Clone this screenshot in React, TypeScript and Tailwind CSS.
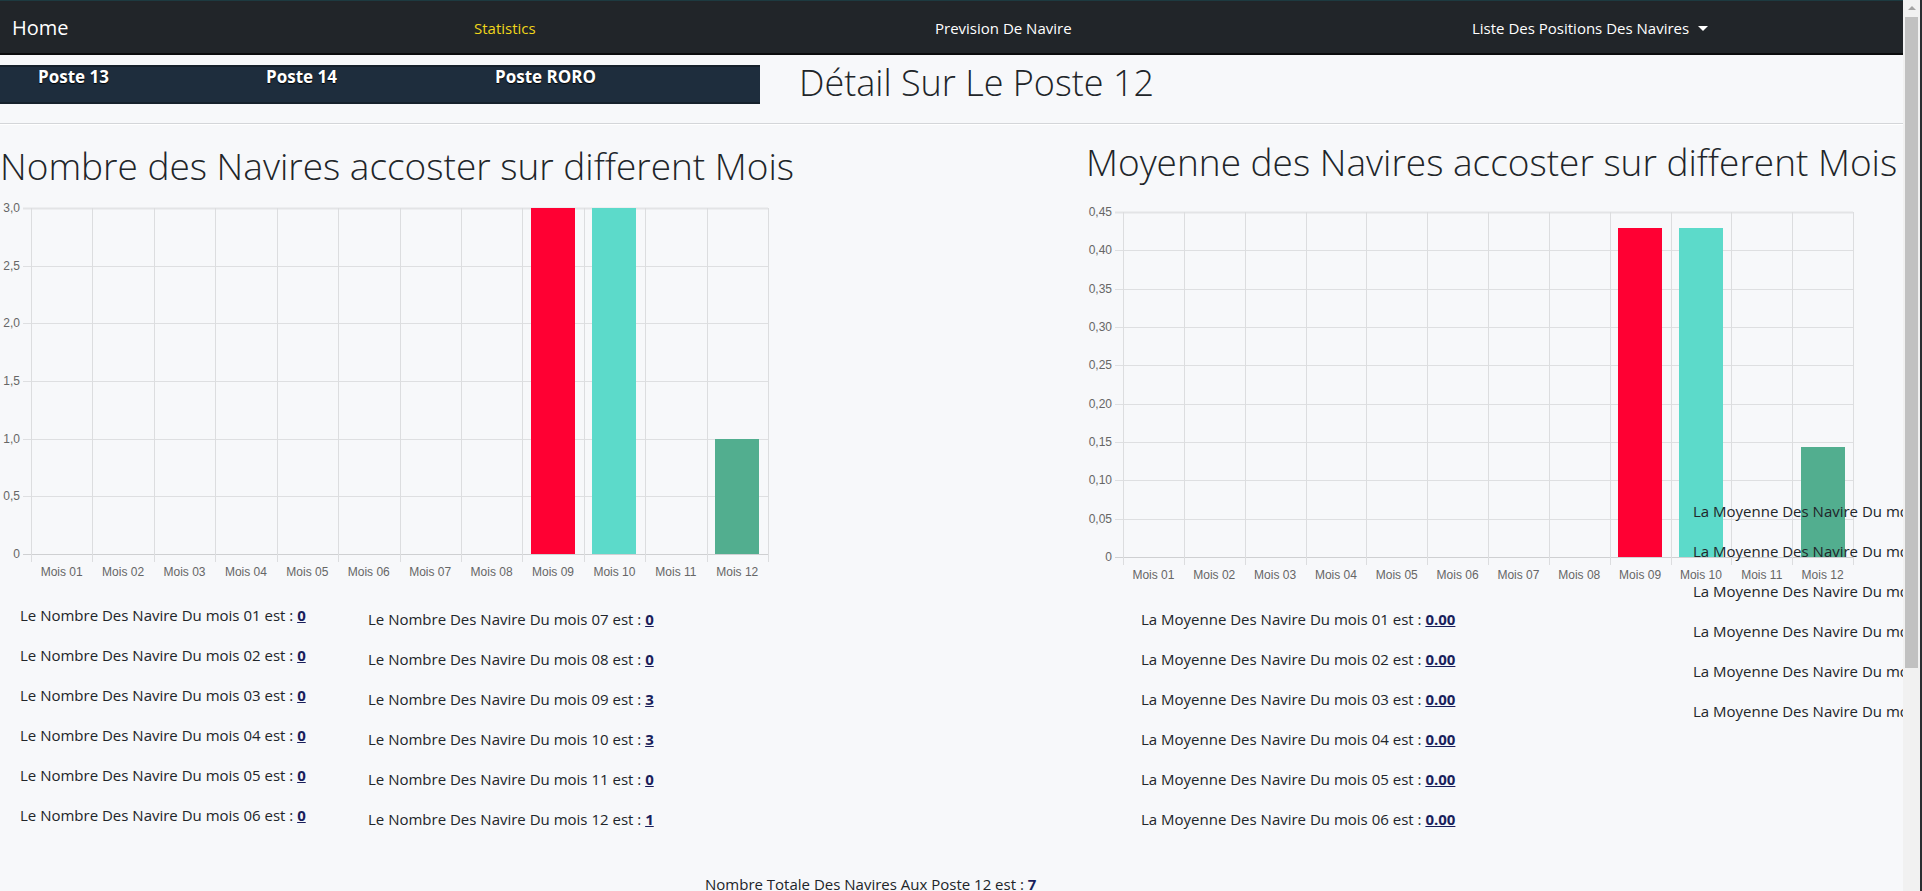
import React from 'react'

type ChartProps = {
  w: number
  h: number
  x0: number
  x1: number
  y0: number
  y1: number
  max: number
  ticks: string[]
  values: number[]
}

const BAR_COLORS = ['#ff0033', '#ff0033', '#ff0033', '#ff0033', '#ff0033', '#ff0033', '#ff0033', '#ff0033', '#ff0033', '#5cdaca', '#5cdaca', '#52ae8f']

function BarChart({ w, h, x0, x1, y0, y1, max, ticks, values }: ChartProps) {
  const cat = (x1 - x0) / 12
  const bw = cat * 0.72
  const n = ticks.length - 1
  const px = (v: number) => Math.round(v) + 0.5

  return (
    <svg width={w} height={h} className="block">
      {/* horizontal grid */}
      {ticks.map((t, i) => {
        const y = y0 + ((y1 - y0) * i) / n
        return (
          <g key={t}>
            <line
              x1={x0 - 8}
              x2={x1}
              y1={px(y)}
              y2={px(y)}
              stroke={i === 0 ? '#e3e4e6' : i === n ? '#cfd0d2' : '#dedfe1'}
              strokeWidth={i === 0 ? 2 : 1}
            />
            <text
              x={x0 - 11}
              y={y + 4}
              textAnchor="end"
              fontSize="12"
              fill="#666"
              fontFamily="'Liberation Sans', Arial, sans-serif"
            >
              {t}
            </text>
          </g>
        )
      })}
      {/* vertical grid */}
      {Array.from({ length: 13 }).map((_, i) => (
        <line
          key={i}
          x1={px(x0 + i * cat)}
          x2={px(x0 + i * cat)}
          y1={y0}
          y2={y1 + 8}
          stroke="#dcdddf"
          strokeWidth={1}
        />
      ))}
      {/* bars */}
      {values.map((v, i) => {
        if (!v) return null
        const bh = ((y1 - y0) * v) / max
        const cx = x0 + cat * (i + 0.5)
        return (
          <rect
            key={i}
            x={Math.round(cx - bw / 2)}
            y={Math.round(y1 - bh)}
            width={Math.round(bw)}
            height={Math.round(bh)}
            fill={BAR_COLORS[i]}
          />
        )
      })}
      {/* x labels */}
      {values.map((_, i) => (
        <text
          key={i}
          x={x0 + cat * (i + 0.5)}
          y={y1 + 22}
          textAnchor="middle"
          fontSize="12"
          fill="#666"
          fontFamily="'Liberation Sans', Arial, sans-serif"
        >
          Mois {String(i + 1).padStart(2, '0')}
        </text>
      ))}
    </svg>
  )
}

const COUNTS = [0, 0, 0, 0, 0, 0, 0, 0, 3, 3, 0, 1]
const AVGS = COUNTS.map((c) => c / 7)
const mois = (i: number) => String(i + 1).padStart(2, '0')

export default function App() {
  return (
    <div className="h-[891px] w-full flex overflow-hidden bg-[#f7f8fa] text-[#212529] font-['Open_Sans',sans-serif]">
      <div className="relative flex-1 min-w-0 overflow-hidden">
        {/* Top navbar */}
        <nav className="h-[55px] pt-[2px] bg-[#212529] border-t border-t-[#1d3a40] border-b-2 border-b-[#0b0c0d] flex items-center text-white">
          <a className="pl-[12px] w-[474px] text-[20px]">Home</a>
          <a className="w-[461px] text-[15px] text-[#f0d61b]">Statistics</a>
          <a className="w-[537px] text-[15px]">Prevision De Navire</a>
          <a className="flex items-center gap-[9px] text-[15px]">
            Liste Des Positions Des Navires
            <span className="w-0 h-0 border-l-[5px] border-r-[5px] border-t-[5px] border-l-transparent border-r-transparent border-t-white" />
          </a>
        </nav>

        {/* Postes bar + title */}
        <div className="mt-[10px] flex items-start">
          <div className="w-[760px] h-[39px] bg-[#1e2d3d] border-y-2 border-[#16212c] flex items-start text-white font-bold text-[17px] leading-[20px] [text-shadow:0_1px_1px_#000]">
            <span className="pl-[38px] w-[266px]">Poste 13</span>
            <span className="w-[229px]">Poste 14</span>
            <span>Poste RORO</span>
          </div>
          <h1 className="ml-[39px] -mt-[6px] text-[36px] leading-[48px] font-light">Détail Sur Le Poste 12</h1>
        </div>
        <hr className="mt-[16px] border-0 border-t border-t-[#d4d6d9] border-b border-b-white" />

        <div className="flex">
          {/* Left column */}
          <div className="w-[1070px] shrink-0">
            <h2 className="mt-[17px] text-[37px] leading-[48px] font-light whitespace-nowrap">
              Nombre des Navires accoster sur different Mois
            </h2>
            <div className="mt-[8px]">
              <BarChart
                w={790}
                h={390}
                x0={31}
                x1={768}
                y0={10}
                y1={356}
                max={3}
                ticks={['3,0', '2,5', '2,0', '1,5', '1,0', '0,5', '0']}
                values={COUNTS}
              />
            </div>
            <div className="mt-[15px] flex pl-[20px] text-[15px] leading-6">
              <div className="w-[348px]">
                {COUNTS.slice(0, 6).map((c, i) => (
                  <p key={i} className="mb-[16px]">
                    Le Nombre Des Navire Du mois {mois(i)} est : <b className="underline text-[#1a1f5c]">{c}</b>
                  </p>
                ))}
              </div>
              <div className="pt-[4px]">
                {COUNTS.slice(6).map((c, i) => (
                  <p key={i} className="mb-[16px]">
                    Le Nombre Des Navire Du mois {mois(i + 6)} est : <b className="underline text-[#1a1f5c]">{c}</b>
                  </p>
                ))}
              </div>
            </div>
          </div>

          {/* Right column */}
          <div className="flex-1 min-w-0">
            <h2 className="mt-[13px] pl-[16px] text-[37px] leading-[48px] font-light whitespace-nowrap">
              Moyenne des Navires accoster sur different Mois
            </h2>
            <div className="mt-[12px]">
              <BarChart
                w={800}
                h={390}
                x0={53}
                x1={783}
                y0={14}
                y1={359}
                max={0.45}
                ticks={['0,45', '0,40', '0,35', '0,30', '0,25', '0,20', '0,15', '0,10', '0,05', '0']}
                values={AVGS}
              />
            </div>
            <div className="mt-[19px] pl-[71px] text-[15px] leading-6">
              {AVGS.slice(0, 6).map((a, i) => (
                <p key={i} className="mb-[16px]">
                  La Moyenne Des Navire Du mois {mois(i)} est : <b className="underline text-[#1a1f5c]">{a.toFixed(2)}</b>
                </p>
              ))}
            </div>
          </div>
        </div>

        <p className="mt-[25px] pl-[705px] text-[15px] leading-6 whitespace-nowrap">
          Nombre Totale Des Navires Aux Poste 12 est : <b className="underline text-[#1a1f5c]">7</b>
        </p>

        {/* second column of averages spilling over the chart */}
        <div className="absolute left-[1693px] top-[499px] text-[15px] leading-6 whitespace-nowrap">
          {AVGS.slice(6).map((a, i) => (
            <p key={i} className="mb-[16px]">
              La Moyenne Des Navire Du mois {mois(i + 6)} est : <b className="underline text-[#1a1f5c]">{a.toFixed(2)}</b>
            </p>
          ))}
        </div>
      </div>

      {/* scrollbar */}
      <div className="w-[19px] shrink-0 bg-[#f1f1f1] border-r-2 border-r-[#2a2d31] flex flex-col items-center">
        <div className="mt-[6px] w-0 h-0 border-l-[4px] border-r-[4px] border-b-[4px] border-l-transparent border-r-transparent border-b-[#a3a3a3]" />
        <div className="mt-[7px] w-[13px] h-[651px] bg-[#c1c1c1]" />
      </div>
    </div>
  )
}
